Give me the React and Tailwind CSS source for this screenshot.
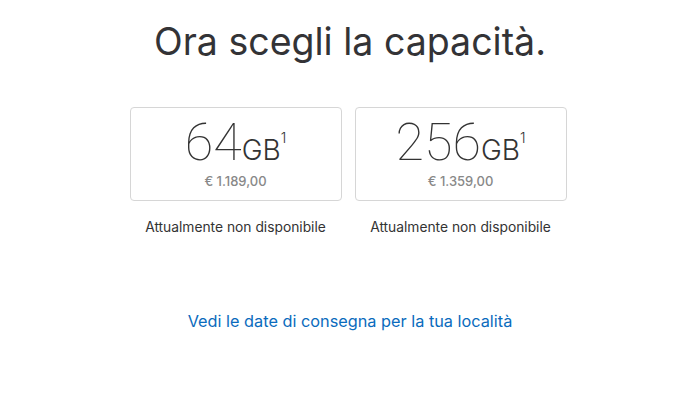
export default function App() {
  const items = [
    { cap: "64", price: "€ 1.189,00" },
    { cap: "256", price: "€ 1.359,00" },
  ];
  return (
    <div className="w-[700px] h-[400px] bg-white flex flex-col items-center" style={{ fontFamily: "Inter, 'Liberation Sans', sans-serif" }}>
      <h1 className="mt-[19px] text-[37.5px] leading-[46px] text-[#333336] font-normal">Ora scegli la capacità.</h1>
      <div className="mt-[42px] flex gap-[13px] -ml-[4px]">
        {items.map((it) => (
          <div key={it.cap} className="w-[212px] flex flex-col items-center">
            <div className="w-[212px] h-[94px] border border-[#d6d6d6] rounded-[4px] flex flex-col items-center pt-[9px]">
              <div className="flex items-baseline text-[#333]">
                <span className="text-[52px] leading-[52px]" style={{ fontFamily: "Roboto, Inter, sans-serif", fontWeight: 100 }}>{it.cap}</span>
                <span className="text-[28px] leading-[28px] font-light">GB</span>
                <span className="text-[14px] leading-[14px] self-start mt-[14px] font-light">1</span>
              </div>
              <div className="mt-[4px] text-[13px] leading-[16px] text-[#888] font-medium">{it.price}</div>
            </div>
            <div className="mt-[17px] text-[13.8px] leading-[18px] text-[#333]">Attualmente non disponibile</div>
          </div>
        ))}
      </div>
      <a className="mt-[74px] text-[16.3px] leading-[22px] text-[#0a6bbd]">Vedi le date di consegna per la tua località</a>
    </div>
  );
}
